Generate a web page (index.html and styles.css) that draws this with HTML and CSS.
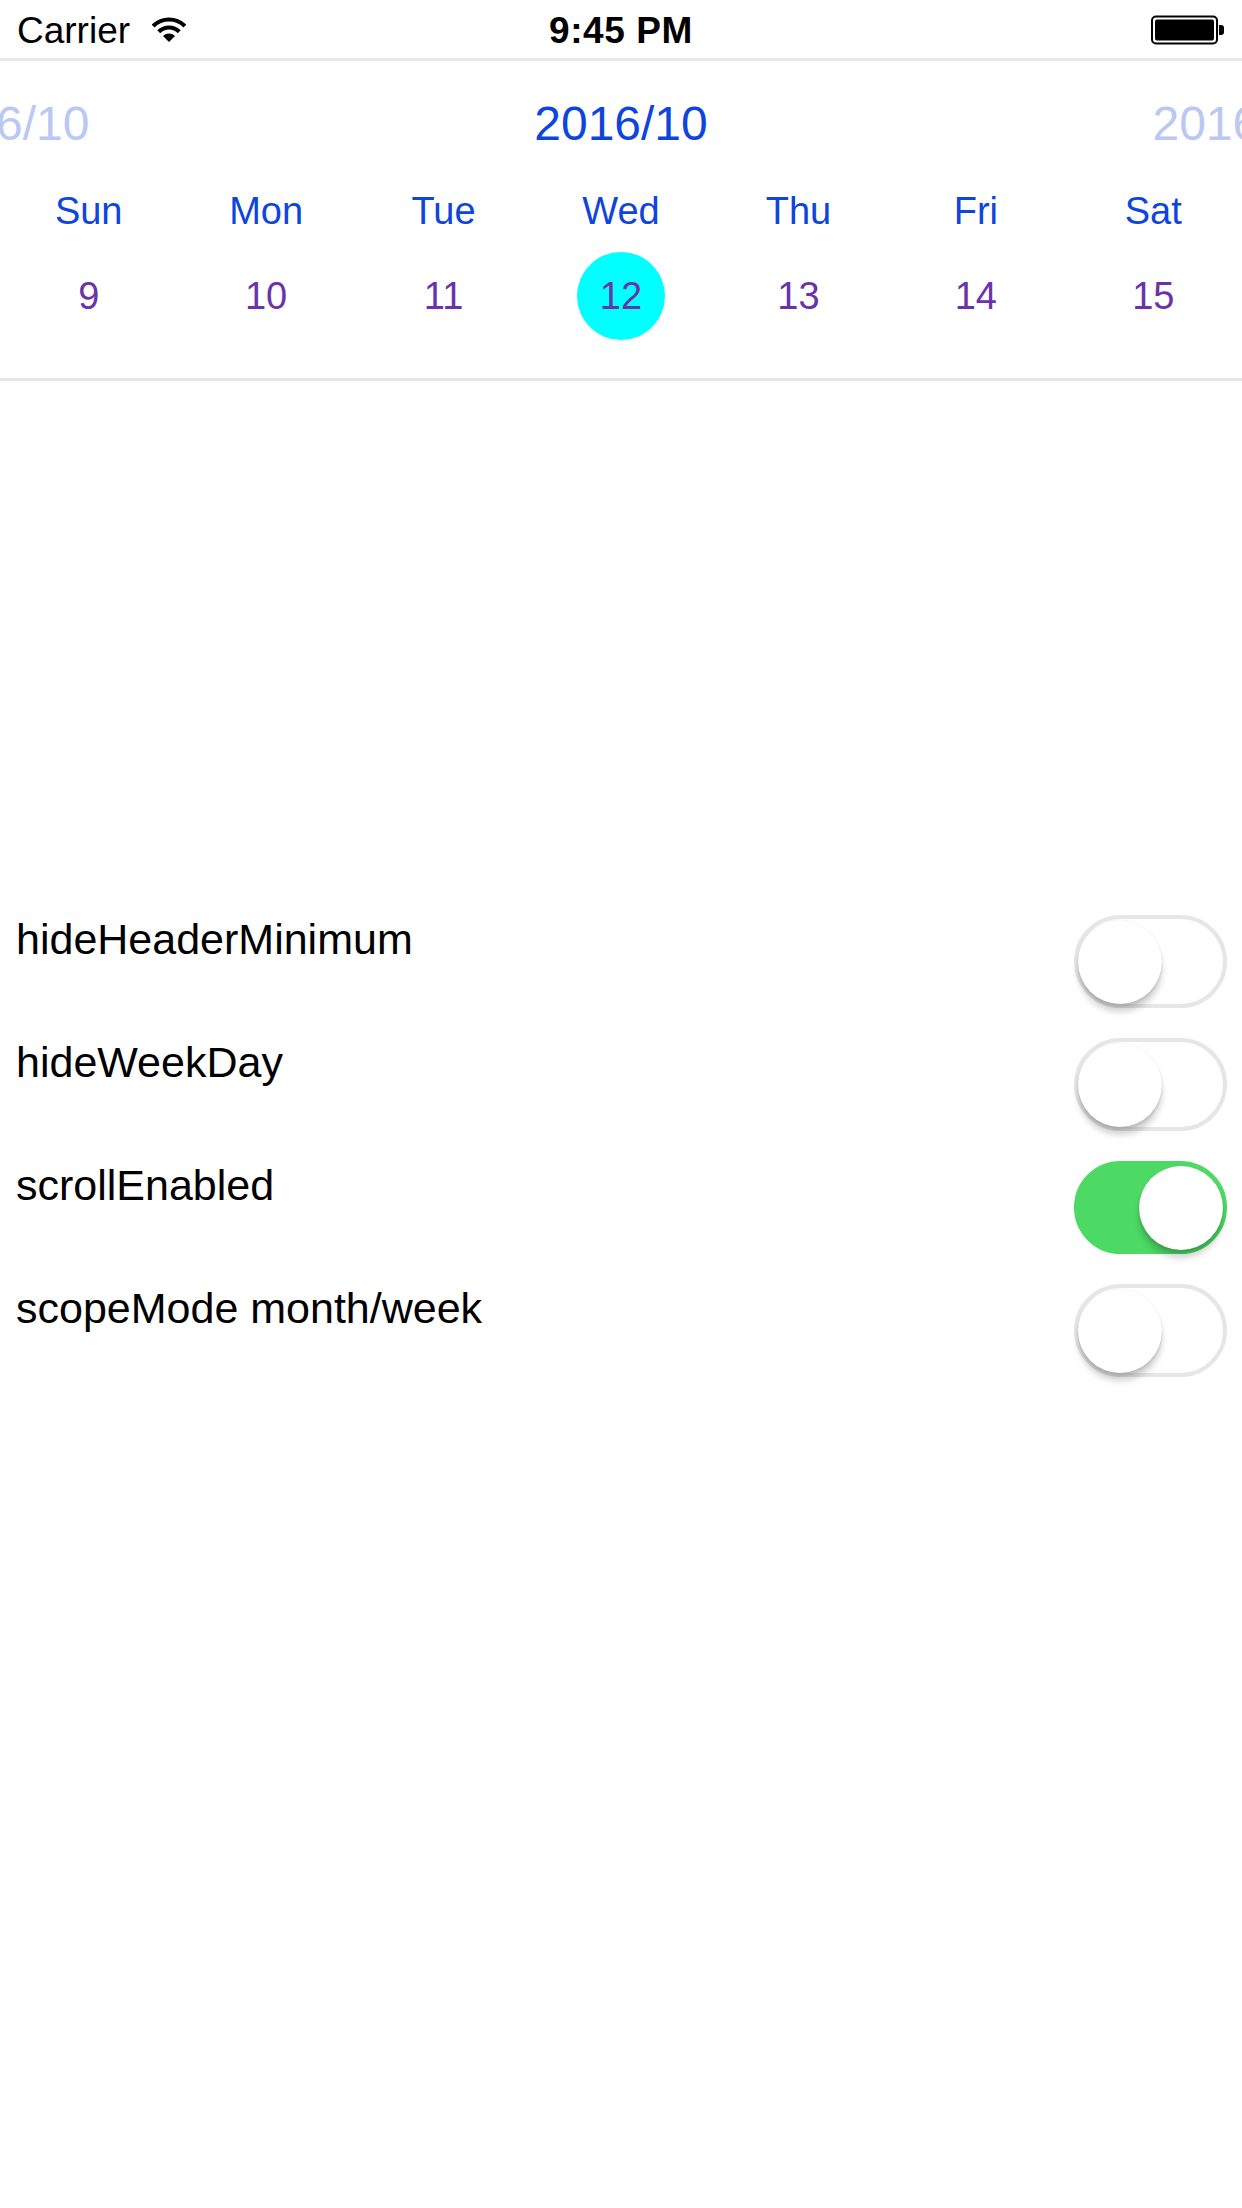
FILE: index.html
```html
<!DOCTYPE html>
<html>
<head>
<meta charset="utf-8">
<link rel="stylesheet" href="styles.css">
</head>
<body>
<div class="screen">
  <div class="status">
    <div class="status-left">
      <span class="carrier">Carrier</span>
      <svg class="wifi" width="34" height="26" viewBox="0 0 34 26">
        <path d="M1.1 9.1 A22.5 22.5 0 0 1 32.9 9.1" fill="none" stroke="#000" stroke-width="4.2"/>
        <path d="M6.75 14.75 A14.5 14.5 0 0 1 27.25 14.75" fill="none" stroke="#000" stroke-width="4.2"/>
        <path d="M17 25 L11 19 A8.5 8.5 0 0 1 23 19 Z" fill="#000"/>
      </svg>
    </div>
    <div class="time">9:45 PM</div>
    <div class="status-right">
      <svg class="battery" width="74" height="30" viewBox="0 0 74 30">
        <rect x="1" y="1.5" width="65" height="27" rx="4" fill="none" stroke="#000" stroke-width="2"/>
        <rect x="4" y="4.5" width="59" height="21" rx="2" fill="#000"/>
        <path d="M68 10 h2 a3 3 0 0 1 3 3 v4 a3 3 0 0 1 -3 3 h-2 Z" fill="#000"/>
      </svg>
    </div>
  </div>

  <div class="calendar">
    <div class="cal-header">
      <span class="month faded">2016/10</span>
      <span class="month">2016/10</span>
      <span class="month faded">2016/10</span>
    </div>
    <div class="weekdays">
      <span>Sun</span><span>Mon</span><span>Tue</span><span>Wed</span><span>Thu</span><span>Fri</span><span>Sat</span>
    </div>
    <div class="days">
      <div class="day"><span>9</span></div>
      <div class="day"><span>10</span></div>
      <div class="day"><span>11</span></div>
      <div class="day"><span class="selected">12</span></div>
      <div class="day"><span>13</span></div>
      <div class="day"><span>14</span></div>
      <div class="day"><span>15</span></div>
    </div>
  </div>

  <div class="options">
    <div class="option">
      <span class="label">hideHeaderMinimum</span>
      <div class="switch"><div class="thumb"></div></div>
    </div>
    <div class="option">
      <span class="label">hideWeekDay</span>
      <div class="switch"><div class="thumb"></div></div>
    </div>
    <div class="option">
      <span class="label">scrollEnabled</span>
      <div class="switch on"><div class="thumb"></div></div>
    </div>
    <div class="option">
      <span class="label">scopeMode month/week</span>
      <div class="switch"><div class="thumb"></div></div>
    </div>
  </div>
</div>
</body>
</html>
```

FILE: styles.css
```css
html, body {
  margin: 0;
  padding: 0;
  background: #ffffff;
}

body {
  font-family: "Liberation Sans", Arial, sans-serif;
  color: #000;
  overflow-x: hidden;
}

.screen {
  width: 1242px;
  height: 2208px;
  overflow: hidden;
  background: #fff;
}

/* status bar */
.status {
  height: 54px;
  display: grid;
  grid-template-columns: 1fr auto 1fr;
  align-items: center;
  padding: 4px 17px 0 17px;
  border-bottom: 3px solid #e8e8e8;
}

.status-left {
  display: flex;
  align-items: center;
  gap: 22px;
}

.carrier {
  font-size: 37px;
  line-height: 54px;
}

.wifi {
  display: block;
  margin-top: -3px;
}

.time {
  font-size: 37px;
  font-weight: bold;
  letter-spacing: 0.6px;
  line-height: 54px;
}

.status-right {
  display: flex;
  justify-content: flex-end;
}

.battery {
  display: block;
  margin-top: -3px;
}

/* calendar */
.calendar {
  overflow: hidden;
  border-bottom: 3px solid #e6e6e6;
  padding-bottom: 21px;
}

.cal-header {
  height: 126px;
  display: flex;
  justify-content: space-between;
  align-items: center;
  margin: 0 -84px;
}

.month {
  font-size: 48px;
  line-height: 126px;
  color: #0e45dd;
}

.month.faded {
  color: #bac8f4;
}

.weekdays {
  display: grid;
  grid-template-columns: repeat(7, 1fr);
  height: 48px;
}

.weekdays span {
  text-align: center;
  font-size: 38px;
  line-height: 48px;
  color: #0e45dd;
}

.days {
  display: grid;
  grid-template-columns: repeat(7, 1fr);
  height: 122px;
}

.day {
  display: flex;
  align-items: center;
  justify-content: center;
}

.day span {
  width: 88px;
  height: 88px;
  border-radius: 50%;
  text-align: center;
  font-size: 38px;
  line-height: 88px;
  color: #6a33a8;
}

.day span.selected {
  background: #00ffff;
}

/* options */
.options {
  margin-top: 534px;
  padding: 0 15px 0 16px;
  display: flex;
  flex-direction: column;
  gap: 30px;
}

.option {
  display: flex;
  justify-content: space-between;
  align-items: flex-start;
}

.label {
  font-size: 43px;
  line-height: 49px;
}

.switch {
  box-sizing: border-box;
  width: 153px;
  height: 93px;
  border-radius: 47px;
  border: 4px solid #e6e6e6;
  background: #fff;
  display: flex;
  align-items: center;
  justify-content: flex-start;
  padding: 0;
}

.switch.on {
  background: #4cd964;
  border-color: #4cd964;
  justify-content: flex-end;
}

.thumb {
  width: 84px;
  height: 84px;
  border-radius: 50%;
  background: #fff;
  box-shadow: 0 8px 6px rgba(0, 0, 0, 0.18), 0 3px 2px rgba(0, 0, 0, 0.08), 0 0 1px rgba(0, 0, 0, 0.15);
}
```
